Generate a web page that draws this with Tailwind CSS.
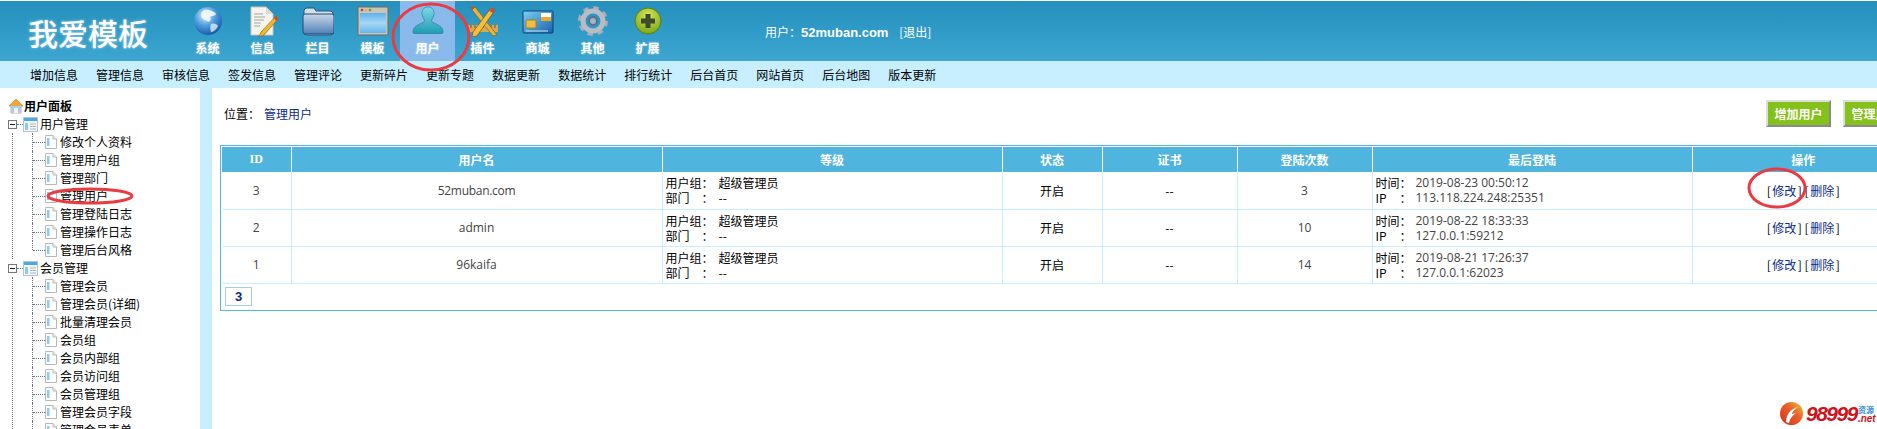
<!DOCTYPE html>
<html lang="zh-CN">
<head>
    <meta charset="UTF-8">
    <title>管理用户</title>
    <script src="https://cdn.jsdelivr.net/npm/@tailwindcss/browser@4"></script>
</head>
<body class="relative h-[429px] overflow-hidden bg-white text-[12px] leading-[15px] text-black font-['Noto_Sans_CJK_SC',sans-serif]">

    <!-- shared icons -->
    <svg class="hidden">
        <defs>
            <linearGradient id="pageFill" x1="0" y1="0" x2="1" y2="1"><stop offset="0" stop-color="#ffffff"/><stop offset="1" stop-color="#dedede"/></linearGradient>
        </defs>
        <symbol id="page" viewBox="0 0 12 14">
            <path d="M0.5 0.5H8L11.5 4V13.5H0.5Z" fill="url(#pageFill)" stroke="#b8b8b8"/>
            <path d="M8 0.5V4H11.5" fill="#eeeeee" stroke="#b8b8b8"/>
            <rect x="2" y="3" width="2.500" height="8" fill="#8ccbf0"/>
        </symbol>
        <symbol id="panel" viewBox="0 0 15 15">
            <rect x="0.5" y="0.5" width="14" height="14" fill="#f4f7fa" stroke="#b4c4d0"/>
            <rect x="1" y="1" width="13" height="3" fill="#4aa8e4"/>
            <rect x="2" y="6" width="3" height="7" fill="#8ccbf0"/>
            <path d="M7 7H13M7 9.5H13M7 12H13" stroke="#a9b6c0"/>
        </symbol>
        <symbol id="minus" viewBox="0 0 9 9">
            <rect x="0.5" y="0.5" width="8" height="8" fill="#ffffff" stroke="#777777"/>
            <path d="M2 4.5H7" stroke="#222222"/>
        </symbol>
    </svg>

    <!-- Header -->
    <header class="flex h-[61px] border-t border-white bg-gradient-to-b from-[#2590bd] to-[#3ca6d1] text-white">
        <div class="w-[180px] pl-[28px] pt-[12px] text-[30px] leading-[38px] font-medium [text-shadow:0_0_3px_rgba(255,255,255,0.5)]">我爱模板</div>
        <nav class="flex font-bold [text-shadow:0_0_2px_rgba(255,255,255,0.6)]">
            <a class="flex h-[60px] w-[55px] flex-col items-center pt-[4px]">
                <svg class="h-[32px] w-[32px]" viewBox="0 0 32 32">
                    <defs><radialGradient id="globe" cx="0.4" cy="0.3" r="0.8"><stop offset="0" stop-color="#e4f1fb"/><stop offset="0.45" stop-color="#4f9fdf"/><stop offset="1" stop-color="#0a4c9e"/></radialGradient></defs>
                    <circle cx="16" cy="16" r="14" fill="url(#globe)"/>
                    <path d="M12 5C16 4 22 6 24 9C22 12 20 10 18 12C20 15 17 18 15 16C12 15 9 13 9 10C9 8 10 6 12 5Z" fill="#f2f8fd" opacity="0.9"/>
                    <path d="M19 19C22 18 25 19 26 21C24 25 21 27 19 27C18 24 18 21 19 19Z" fill="#dcebf7" opacity="0.8"/>
                </svg>
                <span class="mt-[3px]">系统</span>
            </a>
            <a class="flex h-[60px] w-[55px] flex-col items-center pt-[4px]">
                <svg class="h-[32px] w-[32px]" viewBox="0 0 32 32">
                    <path d="M4 2H19L26 9V30H4Z" fill="#f6f4ee" stroke="#c9c5b8"/>
                    <path d="M19 2V9H26Z" fill="#dcd9cf"/>
                    <path d="M7 9H16M7 12H18M7 15H17M7 18H14M7 21H13" stroke="#a8a598"/>
                    <path d="M29 11L31 14L17 30L12 32L14 27Z" fill="#f1b82c" stroke="#7a5a10" stroke-width="0.6"/>
                    <path d="M29 11L31 14L29 16L27 13Z" fill="#d8482f"/>
                </svg>
                <span class="mt-[3px]">信息</span>
            </a>
            <a class="flex h-[60px] w-[55px] flex-col items-center pt-[4px]">
                <svg class="h-[32px] w-[32px]" viewBox="0 0 32 32">
                    <defs><linearGradient id="folder" x1="0" y1="0" x2="0" y2="1"><stop offset="0" stop-color="#c9d8ea"/><stop offset="1" stop-color="#4f7fb4"/></linearGradient></defs>
                    <path d="M2 6Q2 3 5 3H12L14 6H28Q31 6 31 9V27Q31 30 28 30H5Q2 30 2 27Z" fill="#d5dfe9" stroke="#27587e"/>
                    <rect x="1" y="9" width="31" height="20" rx="2" fill="url(#folder)" stroke="#1d4d75"/>
                </svg>
                <span class="mt-[3px]">栏目</span>
            </a>
            <a class="flex h-[60px] w-[55px] flex-col items-center pt-[4px]">
                <svg class="h-[32px] w-[32px]" viewBox="0 0 32 32">
                    <defs><linearGradient id="screen" x1="0" y1="0" x2="0" y2="1"><stop offset="0" stop-color="#5fb2ee"/><stop offset="0.5" stop-color="#a6d6f5"/><stop offset="1" stop-color="#63b7ec"/></linearGradient></defs>
                    <rect x="1" y="2" width="30" height="28" fill="#c9c4b8" stroke="#6f6b60"/>
                    <rect x="3" y="8" width="26" height="20" fill="url(#screen)"/>
                    <circle cx="5" cy="5" r="1.3" fill="#d83a2f"/><circle cx="9" cy="5" r="1.3" fill="#e9b52d"/><circle cx="13" cy="5" r="1.3" fill="#5aa83a"/>
                </svg>
                <span class="mt-[3px]">模板</span>
            </a>
            <a class="flex h-[60px] w-[55px] flex-col items-center bg-[#8ab9ec] pt-[4px]">
                <svg class="h-[32px] w-[32px]" viewBox="0 0 32 32">
                    <defs><linearGradient id="person" x1="0" y1="0" x2="0" y2="1"><stop offset="0" stop-color="#7fd6e6"/><stop offset="1" stop-color="#1f9cb4"/></linearGradient></defs>
                    <path d="M16 2C20.500 2 22.500 5.500 22 9C21.600 12 20 13.500 19.500 15.500C19.500 17.500 24 18.500 27 20.500C30 22.500 31 25 31 27Q31 28.500 29 28.500H3Q1 28.500 1 27C1 25 2 22.500 5 20.500C8 18.500 12.500 17.500 12.500 15.500C12 13.500 10.400 12 10 9C9.500 5.500 11.500 2 16 2Z" fill="url(#person)" stroke="#17788d" stroke-width="0.6"/>
                </svg>
                <span class="mt-[3px]">用户</span>
            </a>
            <a class="flex h-[60px] w-[55px] flex-col items-center pt-[4px]">
                <svg class="h-[32px] w-[32px]" viewBox="0 0 32 32">
                    <path d="M1 20H31V27H1Z" fill="#d4a95c"/>
                    <path d="M4 20V23M8 20V23M12 20V23M16 20V23M20 20V23M24 20V23M28 20V23" stroke="#6f5223"/>
                    <path d="M8 2L30 30L26 31L5 5Z" fill="#e2b53f" stroke="#7a5a10" stroke-width="0.6"/>
                    <path d="M8 2L5 5L3 2Z" fill="#d8482f"/>
                    <path d="M24 3L28 5L10 31L5 32L6 27Z" fill="#f1c13c" stroke="#7a3a10" stroke-width="0.6"/>
                    <path d="M24 3L28 5L26 8L22 6Z" fill="#d8482f"/>
                </svg>
                <span class="mt-[3px]">插件</span>
            </a>
            <a class="flex h-[60px] w-[55px] flex-col items-center pt-[4px]">
                <svg class="h-[32px] w-[32px]" viewBox="0 0 32 32">
                    <defs><linearGradient id="card" x1="0" y1="0" x2="1" y2="1"><stop offset="0" stop-color="#7ed0f2"/><stop offset="1" stop-color="#1561ad"/></linearGradient></defs>
                    <rect x="1" y="6" width="30" height="22" rx="1" fill="url(#card)" stroke="#0d3f78"/>
                    <rect x="19" y="8" width="10" height="4" fill="#ffffff"/>
                    <rect x="19" y="12" width="10" height="4" fill="#efa52a"/>
                    <rect x="4" y="15" width="10" height="8" rx="1" fill="#e9c14a" stroke="#a97f20"/>
                    <path d="M4 26H26" stroke="#c8e7f7"/>
                </svg>
                <span class="mt-[3px]">商城</span>
            </a>
            <a class="flex h-[60px] w-[55px] flex-col items-center pt-[4px]">
                <svg class="h-[32px] w-[32px]" viewBox="0 0 32 32">
                    <circle cx="16" cy="16" r="12.500" fill="none" stroke="#a9adb8" stroke-width="5" stroke-dasharray="5 4.820"/>
                    <circle cx="16" cy="16" r="10" fill="none" stroke="#b9bcc6" stroke-width="5"/>
                    <circle cx="16" cy="16" r="5" fill="#5f6f88"/>
                    <circle cx="16" cy="16" r="3" fill="#9fb4cf"/>
                </svg>
                <span class="mt-[3px]">其他</span>
            </a>
            <a class="flex h-[60px] w-[55px] flex-col items-center pt-[4px]">
                <svg class="h-[32px] w-[32px]" viewBox="0 0 32 32">
                    <defs><radialGradient id="plusBall" cx="0.5" cy="0.3" r="0.8"><stop offset="0" stop-color="#d6e95c"/><stop offset="1" stop-color="#6f9c0c"/></radialGradient></defs>
                    <circle cx="16" cy="16" r="13" fill="url(#plusBall)" stroke="#5c800c"/>
                    <path d="M13.500 9H18.500V13.500H23V18.500H18.500V23H13.500V18.500H9V13.500H13.500Z" fill="#3d4a2c"/>
                </svg>
                <span class="mt-[3px]">扩展</span>
            </a>
        </nav>
        <div class="ml-[90px] pt-[23px]">用户：<b class="font-['Liberation_Sans',sans-serif] text-[13px]">52muban.com</b> <span class="ml-[8px]">[退出]</span></div>
    </header>

    <!-- Sub navigation -->
    <nav class="flex h-[27px] items-center gap-[18px] bg-[#c7efff] pl-[30px]">
        <a>增加信息</a><a>管理信息</a><a>审核信息</a><a>签发信息</a><a>管理评论</a><a>更新碎片</a><a>更新专题</a><a>数据更新</a><a>数据统计</a><a>排行统计</a><a>后台首页</a><a>网站首页</a><a>后台地图</a><a>版本更新</a>
    </nav>

    <div class="flex h-[341px]">
        <!-- Sidebar tree -->
        <aside class="w-[200px] shrink-0 overflow-hidden pt-[9px] leading-[18px]">
            <div class="flex h-[18px] items-center pl-[8px] font-bold">
                <svg class="h-[16px] w-[16px]" viewBox="0 0 16 16">
                    <path d="M1 8L8 1L15 8L13 8V15H3V8Z" fill="#f0a63c" stroke="#c9782a" stroke-width="0.6"/>
                    <rect x="3" y="8" width="10" height="7" fill="#a9cdea"/>
                    <rect x="6" y="10" width="4" height="5" fill="#f4f4f4"/>
                </svg>
                <span>用户面板</span>
            </div>

            <div class="flex h-[18px] items-center pl-[8px]">
                <svg class="h-[9px] w-[9px]"><use href="#minus"/></svg>
                <span class="w-[6px] border-t border-dotted border-gray-500"></span>
                <svg class="h-[15px] w-[15px]"><use href="#panel"/></svg>
                <span class="ml-[2px]">用户管理</span>
            </div>
            <div class="ml-[12px] border-l border-dotted border-gray-500">
                <ul class="ml-[19px]">
                    <li class="flex h-[18px] items-center border-l border-dotted border-gray-500"><span class="w-[12px] border-t border-dotted border-gray-500"></span><svg class="h-[14px] w-[12px]"><use href="#page"/></svg><span class="ml-[3px]">修改个人资料</span></li>
                    <li class="flex h-[18px] items-center border-l border-dotted border-gray-500"><span class="w-[12px] border-t border-dotted border-gray-500"></span><svg class="h-[14px] w-[12px]"><use href="#page"/></svg><span class="ml-[3px]">管理用户组</span></li>
                    <li class="flex h-[18px] items-center border-l border-dotted border-gray-500"><span class="w-[12px] border-t border-dotted border-gray-500"></span><svg class="h-[14px] w-[12px]"><use href="#page"/></svg><span class="ml-[3px]">管理部门</span></li>
                    <li class="flex h-[18px] items-center border-l border-dotted border-gray-500"><span class="w-[12px] border-t border-dotted border-gray-500"></span><svg class="h-[14px] w-[12px]"><use href="#page"/></svg><span class="ml-[3px]">管理用户</span></li>
                    <li class="flex h-[18px] items-center border-l border-dotted border-gray-500"><span class="w-[12px] border-t border-dotted border-gray-500"></span><svg class="h-[14px] w-[12px]"><use href="#page"/></svg><span class="ml-[3px]">管理登陆日志</span></li>
                    <li class="flex h-[18px] items-center border-l border-dotted border-gray-500"><span class="w-[12px] border-t border-dotted border-gray-500"></span><svg class="h-[14px] w-[12px]"><use href="#page"/></svg><span class="ml-[3px]">管理操作日志</span></li>
                    <li class="relative flex h-[18px] items-center pl-px"><span class="absolute left-0 top-0 h-[9px] border-l border-dotted border-gray-500"></span><span class="w-[12px] border-t border-dotted border-gray-500"></span><svg class="h-[14px] w-[12px]"><use href="#page"/></svg><span class="ml-[3px]">管理后台风格</span></li>
                </ul>
            </div>

            <div class="flex h-[18px] items-center pl-[8px]">
                <svg class="h-[9px] w-[9px]"><use href="#minus"/></svg>
                <span class="w-[6px] border-t border-dotted border-gray-500"></span>
                <svg class="h-[15px] w-[15px]"><use href="#panel"/></svg>
                <span class="ml-[2px]">会员管理</span>
            </div>
            <div class="ml-[12px] border-l border-dotted border-gray-500">
                <ul class="ml-[19px]">
                    <li class="flex h-[18px] items-center border-l border-dotted border-gray-500"><span class="w-[12px] border-t border-dotted border-gray-500"></span><svg class="h-[14px] w-[12px]"><use href="#page"/></svg><span class="ml-[3px]">管理会员</span></li>
                    <li class="flex h-[18px] items-center border-l border-dotted border-gray-500"><span class="w-[12px] border-t border-dotted border-gray-500"></span><svg class="h-[14px] w-[12px]"><use href="#page"/></svg><span class="ml-[3px]">管理会员(详细)</span></li>
                    <li class="flex h-[18px] items-center border-l border-dotted border-gray-500"><span class="w-[12px] border-t border-dotted border-gray-500"></span><svg class="h-[14px] w-[12px]"><use href="#page"/></svg><span class="ml-[3px]">批量清理会员</span></li>
                    <li class="flex h-[18px] items-center border-l border-dotted border-gray-500"><span class="w-[12px] border-t border-dotted border-gray-500"></span><svg class="h-[14px] w-[12px]"><use href="#page"/></svg><span class="ml-[3px]">会员组</span></li>
                    <li class="flex h-[18px] items-center border-l border-dotted border-gray-500"><span class="w-[12px] border-t border-dotted border-gray-500"></span><svg class="h-[14px] w-[12px]"><use href="#page"/></svg><span class="ml-[3px]">会员内部组</span></li>
                    <li class="flex h-[18px] items-center border-l border-dotted border-gray-500"><span class="w-[12px] border-t border-dotted border-gray-500"></span><svg class="h-[14px] w-[12px]"><use href="#page"/></svg><span class="ml-[3px]">会员访问组</span></li>
                    <li class="flex h-[18px] items-center border-l border-dotted border-gray-500"><span class="w-[12px] border-t border-dotted border-gray-500"></span><svg class="h-[14px] w-[12px]"><use href="#page"/></svg><span class="ml-[3px]">会员管理组</span></li>
                    <li class="flex h-[18px] items-center border-l border-dotted border-gray-500"><span class="w-[12px] border-t border-dotted border-gray-500"></span><svg class="h-[14px] w-[12px]"><use href="#page"/></svg><span class="ml-[3px]">管理会员字段</span></li>
                    <li class="flex h-[18px] items-center border-l border-dotted border-gray-500"><span class="w-[12px] border-t border-dotted border-gray-500"></span><svg class="h-[14px] w-[12px]"><use href="#page"/></svg><span class="ml-[3px]">管理会员表单</span></li>
                </ul>
            </div>
        </aside>

        <!-- Splitter -->
        <div class="w-[12px] shrink-0 bg-[#c7efff]"></div>

        <!-- Main content -->
        <main class="min-w-0 flex-1 overflow-hidden pl-[8px] pt-[12px]">
            <div class="w-[1700px]">
                <div class="mb-[18px] flex h-[27px] items-center justify-between">
                    <div class="pl-[4px]">位置：<a class="ml-[4px] text-[#0a2a8a]">管理用户</a></div>
                    <div class="flex gap-[12px]">
                        <button class="h-[27px] w-[65px] border-2 border-t-[#dddddd] border-l-[#dddddd] border-r-[#8a8a8a] border-b-[#8a8a8a] bg-[#84c11a] font-bold text-white">增加用户</button>
                        <button class="h-[27px] w-[77px] border-2 border-t-[#dddddd] border-l-[#dddddd] border-r-[#8a8a8a] border-b-[#8a8a8a] bg-[#84c11a] font-bold text-white">管理用户组</button>
                    </div>
                </div>

                <div class="h-[166px] w-[1694px] border border-[#55b8e0] p-px">
                    <table class="w-[1692px] table-fixed border-collapse">
                        <colgroup>
                            <col class="w-[69px]"><col class="w-[371px]"><col class="w-[340px]"><col class="w-[100px]"><col class="w-[135px]"><col class="w-[135px]"><col class="w-[320px]"><col class="w-[222px]">
                        </colgroup>
                        <thead>
                            <tr class="h-[25px] bg-[#4fb4de] font-bold text-white">
                                <th class="border-r border-white font-['Liberation_Serif',serif]">ID</th>
                                <th class="border-r border-white">用户名</th>
                                <th class="border-r border-white">等级</th>
                                <th class="border-r border-white">状态</th>
                                <th class="border-r border-white">证书</th>
                                <th class="border-r border-white">登陆次数</th>
                                <th class="border-r border-white">最后登陆</th>
                                <th>操作</th>
                            </tr>
                        </thead>
                        <tbody class="text-center">
                            <tr class="h-[37px] border-b border-[#c7efff]">
                                <td class="border-r border-[#c7efff] font-['Open_Sans',sans-serif] text-[#444444]">3</td>
                                <td class="border-r border-[#c7efff] font-['Open_Sans',sans-serif] tracking-[-0.3px] text-[#444444]">52muban.com</td>
                                <td class="border-r border-[#c7efff] pl-[3px] text-left">
                                    <div class="grid grid-cols-[36px_17px_1fr]"><span>用户组</span><span>：</span><span>超级管理员</span><span>部门</span><span>：</span><span>--</span></div>
                                </td>
                                <td class="border-r border-[#c7efff]">开启</td>
                                <td class="border-r border-[#c7efff]">--</td>
                                <td class="border-r border-[#c7efff] font-['Open_Sans',sans-serif] text-[#444444]">3</td>
                                <td class="border-r border-[#c7efff] pl-[3px] text-left">
                                    <div class="grid grid-cols-[24px_16px_1fr]"><span>时间</span><span>：</span><span class="font-['Open_Sans',sans-serif] text-[#444444]">2019-08-23 00:50:12</span><span>IP</span><span>：</span><span class="font-['Open_Sans',sans-serif] text-[#444444]">113.118.224.248:25351</span></div>
                                </td>
                                <td>[<a class="px-[1.5px] text-[#0a2a8a]">修改</a>] [<a class="px-[1.5px] text-[#0a2a8a]">删除</a>]</td>
                            </tr>
                            <tr class="h-[37px] border-b border-[#c7efff]">
                                <td class="border-r border-[#c7efff] font-['Open_Sans',sans-serif] text-[#444444]">2</td>
                                <td class="border-r border-[#c7efff] font-['Open_Sans',sans-serif] text-[#444444]">admin</td>
                                <td class="border-r border-[#c7efff] pl-[3px] text-left">
                                    <div class="grid grid-cols-[36px_17px_1fr]"><span>用户组</span><span>：</span><span>超级管理员</span><span>部门</span><span>：</span><span>--</span></div>
                                </td>
                                <td class="border-r border-[#c7efff]">开启</td>
                                <td class="border-r border-[#c7efff]">--</td>
                                <td class="border-r border-[#c7efff] font-['Open_Sans',sans-serif] text-[#444444]">10</td>
                                <td class="border-r border-[#c7efff] pl-[3px] text-left">
                                    <div class="grid grid-cols-[24px_16px_1fr]"><span>时间</span><span>：</span><span class="font-['Open_Sans',sans-serif] text-[#444444]">2019-08-22 18:33:33</span><span>IP</span><span>：</span><span class="font-['Open_Sans',sans-serif] text-[#444444]">127.0.0.1:59212</span></div>
                                </td>
                                <td>[<a class="px-[1.5px] text-[#0a2a8a]">修改</a>] [<a class="px-[1.5px] text-[#0a2a8a]">删除</a>]</td>
                            </tr>
                            <tr class="h-[37px] border-b border-[#c7efff]">
                                <td class="border-r border-[#c7efff] font-['Open_Sans',sans-serif] text-[#444444]">1</td>
                                <td class="border-r border-[#c7efff] font-['Open_Sans',sans-serif] text-[#444444]">96kaifa</td>
                                <td class="border-r border-[#c7efff] pl-[3px] text-left">
                                    <div class="grid grid-cols-[36px_17px_1fr]"><span>用户组</span><span>：</span><span>超级管理员</span><span>部门</span><span>：</span><span>--</span></div>
                                </td>
                                <td class="border-r border-[#c7efff]">开启</td>
                                <td class="border-r border-[#c7efff]">--</td>
                                <td class="border-r border-[#c7efff] font-['Open_Sans',sans-serif] text-[#444444]">14</td>
                                <td class="border-r border-[#c7efff] pl-[3px] text-left">
                                    <div class="grid grid-cols-[24px_16px_1fr]"><span>时间</span><span>：</span><span class="font-['Open_Sans',sans-serif] text-[#444444]">2019-08-21 17:26:37</span><span>IP</span><span>：</span><span class="font-['Open_Sans',sans-serif] text-[#444444]">127.0.0.1:62023</span></div>
                                </td>
                                <td>[<a class="px-[1.5px] text-[#0a2a8a]">修改</a>] [<a class="px-[1.5px] text-[#0a2a8a]">删除</a>]</td>
                            </tr>
                        </tbody>
                    </table>
                    <div class="ml-[3px] mt-[3px] flex h-[19px] w-[27px] items-center justify-center border border-[#a8cdf0] font-['Liberation_Sans',sans-serif] text-[13px] font-bold text-[#0a2a8a]">3</div>
                </div>
            </div>
        </main>
    </div>

    <!-- Red annotation marks drawn over the page -->
    <svg class="pointer-events-none absolute left-0 top-0 h-[429px] w-[1877px]" viewBox="0 0 1877 429">
        <ellipse cx="431" cy="37" rx="38" ry="33" fill="none" stroke="#ea3a42" stroke-width="3"/>
        <ellipse cx="90" cy="196" rx="42" ry="7" fill="none" stroke="#ea3a42" stroke-width="3"/>
        <ellipse cx="1777" cy="188" rx="28" ry="19" fill="none" stroke="#ea3a42" stroke-width="3"/>
    </svg>

    <!-- Watermark -->
    <div class="absolute bottom-[4px] left-[1780px] flex h-[23px] items-center">
        <svg class="h-[23px] w-[23px]" viewBox="0 0 23 23">
            <defs><linearGradient id="wm" x1="0" y1="1" x2="1" y2="0"><stop offset="0" stop-color="#d92b1c"/><stop offset="0.6" stop-color="#e8642a"/><stop offset="1" stop-color="#f8c92c"/></linearGradient></defs>
            <circle cx="11.500" cy="11.500" r="11.500" fill="url(#wm)"/>
            <path d="M6 20C6 13 10 7 18 5C14 8 12 10 12 12L16 11C13 13 10 16 9 21Z" fill="#ffffff"/>
        </svg>
        <span class="ml-[3px] font-['Liberation_Sans',sans-serif] text-[21px] font-bold italic leading-[23px] tracking-[-1.5px] text-[#d0141c]">98999</span>
        <span class="ml-[1px] flex w-[16px] flex-col leading-[9px]">
            <span class="text-[8px] font-bold text-[#2f8fd8]">资源</span>
            <span class="font-['Liberation_Sans',sans-serif] text-[10px] font-bold italic text-[#d0141c]">.net</span>
        </span>
    </div>
</body>
</html>
